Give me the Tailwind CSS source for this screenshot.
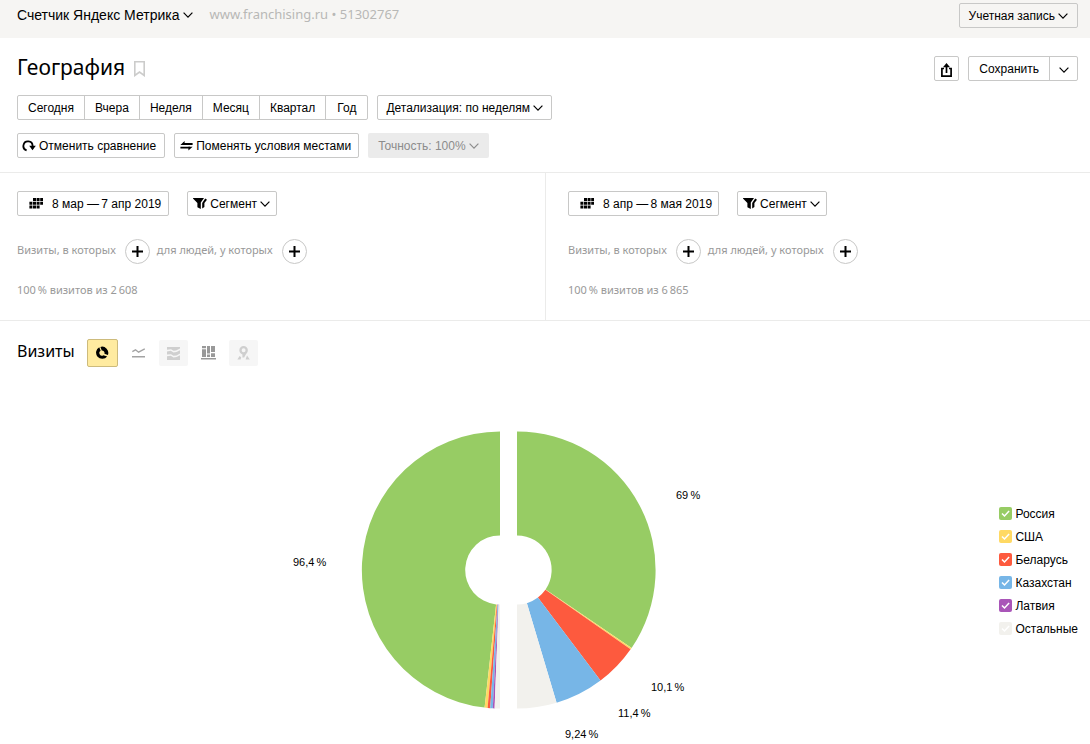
<!DOCTYPE html>
<html lang="ru">
<head>
<meta charset="utf-8">
<meta name="viewport" content="width=device-width, initial-scale=1">
<title>География</title>
<script src="https://cdn.jsdelivr.net/npm/@tailwindcss/browser@4"></script>
</head>
<body class="bg-white font-['Liberation_Sans',Arial,sans-serif] text-xs text-black">
<svg class="hidden" aria-hidden="true">
  <symbol id="chev" viewBox="0 0 10 6"><path d="M.6.7 5 5.1 9.4.7" fill="none" stroke="currentColor" stroke-width="1.2"/></symbol>
  <symbol id="plus" viewBox="0 0 11 11"><path d="M5.5 0v11M0 5.5h11" stroke="currentColor" stroke-width="2"/></symbol>
  <symbol id="cal" viewBox="0 0 14 11"><path d="M4 0h3v3H4zM7.6 0h3v3h-3zM11.2 0h3v3h-3zM.4 3.7h3v3h-3zM4 3.7h3v3H4zM7.6 3.7h3v3h-3zM11.2 3.7h3v3h-3zM.4 7.4h3v3h-3zM4 7.4h3v3H4zM7.6 7.4h3v3h-3z" fill="currentColor"/></symbol>
  <symbol id="funnel" viewBox="0 0 14 11"><path d="M0 0h11L7.8 4.6V11L4.4 9.2V5L0 .6zM12.2.6 14 1.8 11.4 5v4L9.2 10.6V5z" fill="currentColor"/></symbol>
  <symbol id="tick" viewBox="0 0 13 13"><path d="M3 6.4 5.5 9l4.6-5" fill="none" stroke="#fff" stroke-width="1.5"/></symbol>
</svg>

<header class="flex h-[38px] items-start justify-between bg-[#f6f5f3] pt-[3px] pr-3 pl-[17px]">
  <div class="flex h-6 items-center">
    <button class="flex items-center gap-1 pb-px text-sm">Счетчик Яндекс Метрика <svg class="h-[6px] w-[10px]"><use href="#chev"/></svg></button>
    <span class="ml-4 font-['Noto_Sans',sans-serif] text-[13px] text-[#b8b8b6]">www.franchising.ru • 51302767</span>
  </div>
  <button class="flex h-[25px] items-center gap-[3px] rounded-[2px] border border-[#c8c8c7] px-[9px]">Учетная запись <svg class="h-[6px] w-[10px]"><use href="#chev"/></svg></button>
</header>

<main>
  <section class="pr-3 pb-[14px] pl-[17px]">
    <div class="flex h-[57px] items-center justify-between pt-1">
      <div class="flex items-center gap-[9px]">
        <h1 class="pb-[3px] font-['Noto_Sans',sans-serif] text-[21px]">География</h1>
        <button aria-label="В избранное" class="pt-px text-[#cccccb]"><svg width="11" height="16" viewBox="0 0 11 16"><path d="M.8.8h9.4v13.7L5.5 11 .8 14.5z" fill="none" stroke="currentColor" stroke-width="1.6"/></svg></button>
      </div>
      <div class="flex gap-[9px]">
        <button aria-label="Экспорт" class="flex size-[25px] items-center justify-center rounded-[2px] border border-[#c8c8c7] pt-[3px]"><svg width="11" height="14" viewBox="0 0 11 14"><path d="M3 5.5H.9v7.6h9.2V5.5H8M5.5 10V2" fill="none" stroke="currentColor" stroke-width="1.7"/><path d="M5.5 0 9 4.2H2z"/></svg></button>
        <div class="flex h-[25px] rounded-[2px] border border-[#c8c8c7]">
          <button class="px-[10px]">Сохранить</button>
          <button aria-label="Другие действия" class="flex w-7 items-center justify-center border-l border-[#c8c8c7] pt-[3px]"><svg class="h-[6px] w-[10px]"><use href="#chev"/></svg></button>
        </div>
      </div>
    </div>
    <div class="flex gap-[9px]">
      <div class="flex h-[25px] divide-x divide-[#c8c8c7] rounded-[2px] border border-[#c8c8c7]">
        <button class="px-[10px]">Сегодня</button>
        <button class="px-[10px]">Вчера</button>
        <button class="px-[10px]">Неделя</button>
        <button class="px-[10px]">Месяц</button>
        <button class="px-[10px]">Квартал</button>
        <button class="px-[11px]">Год</button>
      </div>
      <button class="flex h-[25px] items-center gap-[3px] rounded-[2px] border border-[#c8c8c7] px-2">Детализация: по неделям <svg class="h-[6px] w-[10px]"><use href="#chev"/></svg></button>
    </div>
    <div class="mt-[13px] flex gap-[9px]">
      <button class="flex h-[25px] items-center gap-[3px] rounded-[2px] border border-[#c8c8c7] pr-2 pl-1"><svg width="14" height="12" viewBox="0 0 14 12"><path d="M4.6 10.4A4.6 4.6 0 1 1 10.6 6" fill="none" stroke="currentColor" stroke-width="1.8"/><path d="M7.2 5.8h6.6l-3.3 4.4z"/></svg>Отменить сравнение</button>
      <button class="flex h-[25px] items-center gap-[3px] rounded-[2px] border border-[#c8c8c7] pr-[7px] pl-[5px]"><svg width="13" height="10" viewBox="0 0 13 10"><path d="M3 3h9.600M.4 6.600H10" stroke="currentColor" stroke-width="1.800"/><path d="M.4 3.900 4.600 0v3.900zM12.600 5.700 8.400 9.600V5.700z"/></svg>Поменять условия местами</button>
      <button disabled class="flex h-[25px] items-center gap-[3px] rounded-[2px] bg-[#ebebeb] px-[10px] text-[#8c8c8c]">Точность: 100% <svg class="h-[6px] w-[10px]"><use href="#chev"/></svg></button>
    </div>
  </section>

  <section class="grid grid-cols-2 border-y border-[#ebebea]">
    <div class="h-[147px] pt-[18px] pl-[17px]">
      <div class="flex gap-[18px]">
        <button class="flex h-[25px] items-center gap-[9px] rounded-[2px] border border-[#c8c8c7] pr-[7px] pl-[11px]"><svg class="h-[11px] w-[14px]"><use href="#cal"/></svg>8 мар —&thinsp;7 апр 2019</button>
        <button class="flex h-[25px] items-center gap-[3px] rounded-[2px] border border-[#c8c8c7] pr-[6px] pl-[5px]"><svg class="h-[11px] w-[14px]"><use href="#funnel"/></svg>Сегмент <svg class="h-[6px] w-[10px]"><use href="#chev"/></svg></button>
      </div>
      <div class="mt-[22px] flex h-[26px] items-center font-['Noto_Sans',sans-serif] text-[11px] text-[#999]">
        <span class="pb-[2px]">Визиты, в которых</span>
        <button aria-label="Добавить условие визитов" class="mr-[7px] ml-[9px] flex size-[25px] items-center justify-center rounded-full border border-[#c8c8c7] text-black"><svg class="size-[11px]"><use href="#plus"/></svg></button>
        <span class="pb-[2px]">для людей, у которых</span>
        <button aria-label="Добавить условие людей" class="ml-[9px] flex size-[25px] items-center justify-center rounded-full border border-[#c8c8c7] text-black"><svg class="size-[11px]"><use href="#plus"/></svg></button>
      </div>
      <p class="mt-[19px] font-['Noto_Sans',sans-serif] text-[11px] text-[#999]">100&thinsp;% визитов из 2&thinsp;608</p>
    </div>
    <div class="h-[147px] border-l border-[#ebebea] pt-[18px] pl-[22px]">
      <div class="flex gap-[18px]">
        <button class="flex h-[25px] items-center gap-[9px] rounded-[2px] border border-[#c8c8c7] pr-[6px] pl-[11px]"><svg class="h-[11px] w-[14px]"><use href="#cal"/></svg>8 апр —&thinsp;8 мая 2019</button>
        <button class="flex h-[25px] items-center gap-[3px] rounded-[2px] border border-[#c8c8c7] pr-[6px] pl-[5px]"><svg class="h-[11px] w-[14px]"><use href="#funnel"/></svg>Сегмент <svg class="h-[6px] w-[10px]"><use href="#chev"/></svg></button>
      </div>
      <div class="mt-[22px] flex h-[26px] items-center font-['Noto_Sans',sans-serif] text-[11px] text-[#999]">
        <span class="pb-[2px]">Визиты, в которых</span>
        <button aria-label="Добавить условие визитов" class="mr-[7px] ml-[9px] flex size-[25px] items-center justify-center rounded-full border border-[#c8c8c7] text-black"><svg class="size-[11px]"><use href="#plus"/></svg></button>
        <span class="pb-[2px]">для людей, у которых</span>
        <button aria-label="Добавить условие людей" class="ml-[9px] flex size-[25px] items-center justify-center rounded-full border border-[#c8c8c7] text-black"><svg class="size-[11px]"><use href="#plus"/></svg></button>
      </div>
      <p class="mt-[19px] font-['Noto_Sans',sans-serif] text-[11px] text-[#999]">100&thinsp;% визитов из 6&thinsp;865</p>
    </div>
  </section>

  <section class="pt-[18px] pr-3 pl-[17px]">
    <div class="flex h-7 items-center">
      <h2 class="pb-1 font-['Noto_Sans',sans-serif] text-base">Визиты</h2>
      <button aria-label="Круговая диаграмма" class="ml-3 flex h-7 w-[31px] items-center justify-center rounded-[2px] border border-[#cdbb7c] bg-[#ffeba0]"><svg width="14" height="14" viewBox="0 0 14 14"><path d="M4.3 1.2 5.6 4.8A2.6 2.6 0 0 0 8.4 9.2L12.2 10.4A6.2 6.2 0 1 1 4.3 1.2z"/><path d="M5.4.9A6.2 6.2 0 0 1 12.9 9L9.4 7.8A2.6 2.6 0 0 0 6.8 4.4z"/></svg></button>
      <button aria-label="Линии" class="ml-[6px] flex h-[26px] w-[29px] items-center justify-center text-[#a3a3a3]"><svg width="13" height="10" viewBox="0 0 13 10"><path d="M.3 3.6 3.5 1.8 6.6 4.2 12.8.8M0 8.8h13" fill="none" stroke="currentColor" stroke-width="1.4"/></svg></button>
      <button aria-label="Области" disabled class="ml-[6px] flex h-[26px] w-[29px] items-center justify-center rounded-[2px] bg-[#f6f6f6] text-[#cfcfcf]"><svg width="13" height="13" viewBox="0 0 13 13"><path d="M0 0h13v1.500L9 3.500 6.500 3.800 4 2.200 0 2.800zM0 4.400 3.800 3.800 6.500 5.500 9.500 5 13 3.200v3.400L9.500 8.400 6.500 8.800 4 7.200 0 7.600zM0 9.200 3.800 8.800 6.500 10.400 9.500 10 13 8.200V13H0z" fill="currentColor"/></svg></button>
      <button aria-label="Столбцы" class="ml-[6px] flex h-[26px] w-[29px] items-center justify-center text-[#999]"><svg width="15" height="14" viewBox="0 0 15 14"><path d="M0 12h15v1.6H0zM1 0h4v2.2H1zM1 3.2h4V11H1zM6 0h3v7.4H6zM6 8.5h3V11H6zM10 0h4v6h-4zM10 7.2h4V11h-4z" fill="currentColor"/></svg></button>
      <button aria-label="Карта" disabled class="ml-[6px] flex h-[26px] w-[29px] items-center justify-center rounded-[2px] bg-[#f6f6f6] text-[#cfcfcf]"><svg width="13" height="14" viewBox="0 0 13 14"><circle cx="6.600" cy="4.300" r="3.100" fill="none" stroke="currentColor" stroke-width="2.300"/><path d="M5.400 7.500 9.800 6.600 7.200 11.500H5.400zM.4 13.600 2.600 10 4.200 11.200 3.600 13.600zM10 9.600l2.800 4H8.600z" fill="currentColor"/></svg></button>
    </div>

    <div class="mt-[53px] flex items-start">
      <div class="flex flex-1 justify-center">
        <svg width="440" height="324" viewBox="288 420 440 324" role="img" aria-label="Визиты по странам" class="text-[11px]">
          <g transform="translate(500 570)">
            <path d="M0-138.5A138.5 138.5 0 0 0-15.4 137.6L-3.9 34.4A34.6 34.6 0 0 1 0-34.6z" fill="#97cc64"/>
            <path d="M-15.4 137.6-12.4 137.9-3.1 34.5-3.9 34.4z" fill="#ffd963"/>
            <path d="M-12.4 137.9-9.8 138.2-2.5 34.5-3.1 34.5z" fill="#fd5a3e"/>
            <path d="M-9.8 138.2-7.2 138.3-1.8 34.6-2.5 34.5z" fill="#77b6e7"/>
            <path d="M-7.2 138.3-5.4 138.4-1.4 34.6-1.8 34.6z" fill="#a955b8"/>
            <path d="M-5.4 138.4 0 138.5V34.6H-1.4z" fill="#f2f1ed"/>
          </g>
          <g transform="translate(517 570)">
            <path d="M0-138.5A138.5 138.5 0 0 1 114.6 77.9L28.6 19.5A34.6 34.6 0 0 0 0-34.6z" fill="#97cc64"/>
            <path d="M114.6 77.9 113.6 79.2 28.4 19.8 28.6 19.5z" fill="#ffd963"/>
            <path d="M113.6 79.2A138.5 138.5 0 0 1 83.5 110.5L20.9 27.6A34.6 34.6 0 0 0 28.4 19.8z" fill="#fd5a3e"/>
            <path d="M83.5 110.5A138.5 138.5 0 0 1 39.6 132.7L9.9 33.2A34.6 34.6 0 0 0 20.9 27.6z" fill="#77b6e7"/>
            <path d="M39.6 132.7A138.5 138.5 0 0 1 0 138.5V34.6A34.6 34.6 0 0 0 9.9 33.2z" fill="#f2f1ed"/>
          </g>
          <text x="293" y="566">96,4&#8201;%</text>
          <text x="676" y="499">69&#8201;%</text>
          <text x="651" y="691">10,1&#8201;%</text>
          <text x="618" y="717">11,4&#8201;%</text>
          <text x="565" y="738">9,24&#8201;%</text>
        </svg>
      </div>
      <div class="mt-[82px] flex flex-col">
        <label class="flex h-[23px] items-center gap-[3px]"><span class="grid"><input type="checkbox" checked class="col-start-1 row-start-1 size-[13px] appearance-none rounded-[2px] bg-[#97cc64]"><svg class="pointer-events-none col-start-1 row-start-1 size-[13px]"><use href="#tick"/></svg></span>Россия</label>
        <label class="flex h-[23px] items-center gap-[3px]"><span class="grid"><input type="checkbox" checked class="col-start-1 row-start-1 size-[13px] appearance-none rounded-[2px] bg-[#ffd963]"><svg class="pointer-events-none col-start-1 row-start-1 size-[13px]"><use href="#tick"/></svg></span>США</label>
        <label class="flex h-[23px] items-center gap-[3px]"><span class="grid"><input type="checkbox" checked class="col-start-1 row-start-1 size-[13px] appearance-none rounded-[2px] bg-[#fd5a3e]"><svg class="pointer-events-none col-start-1 row-start-1 size-[13px]"><use href="#tick"/></svg></span>Беларусь</label>
        <label class="flex h-[23px] items-center gap-[3px]"><span class="grid"><input type="checkbox" checked class="col-start-1 row-start-1 size-[13px] appearance-none rounded-[2px] bg-[#77b6e7]"><svg class="pointer-events-none col-start-1 row-start-1 size-[13px]"><use href="#tick"/></svg></span>Казахстан</label>
        <label class="flex h-[23px] items-center gap-[3px]"><span class="grid"><input type="checkbox" checked class="col-start-1 row-start-1 size-[13px] appearance-none rounded-[2px] bg-[#a955b8]"><svg class="pointer-events-none col-start-1 row-start-1 size-[13px]"><use href="#tick"/></svg></span>Латвия</label>
        <label class="flex h-[23px] items-center gap-[3px]"><span class="grid"><input type="checkbox" checked class="col-start-1 row-start-1 size-[13px] appearance-none rounded-[2px] bg-[#f2f1ed]"><svg class="pointer-events-none col-start-1 row-start-1 size-[13px]"><use href="#tick"/></svg></span>Остальные</label>
      </div>
    </div>
  </section>
</main>
</body>
</html>
